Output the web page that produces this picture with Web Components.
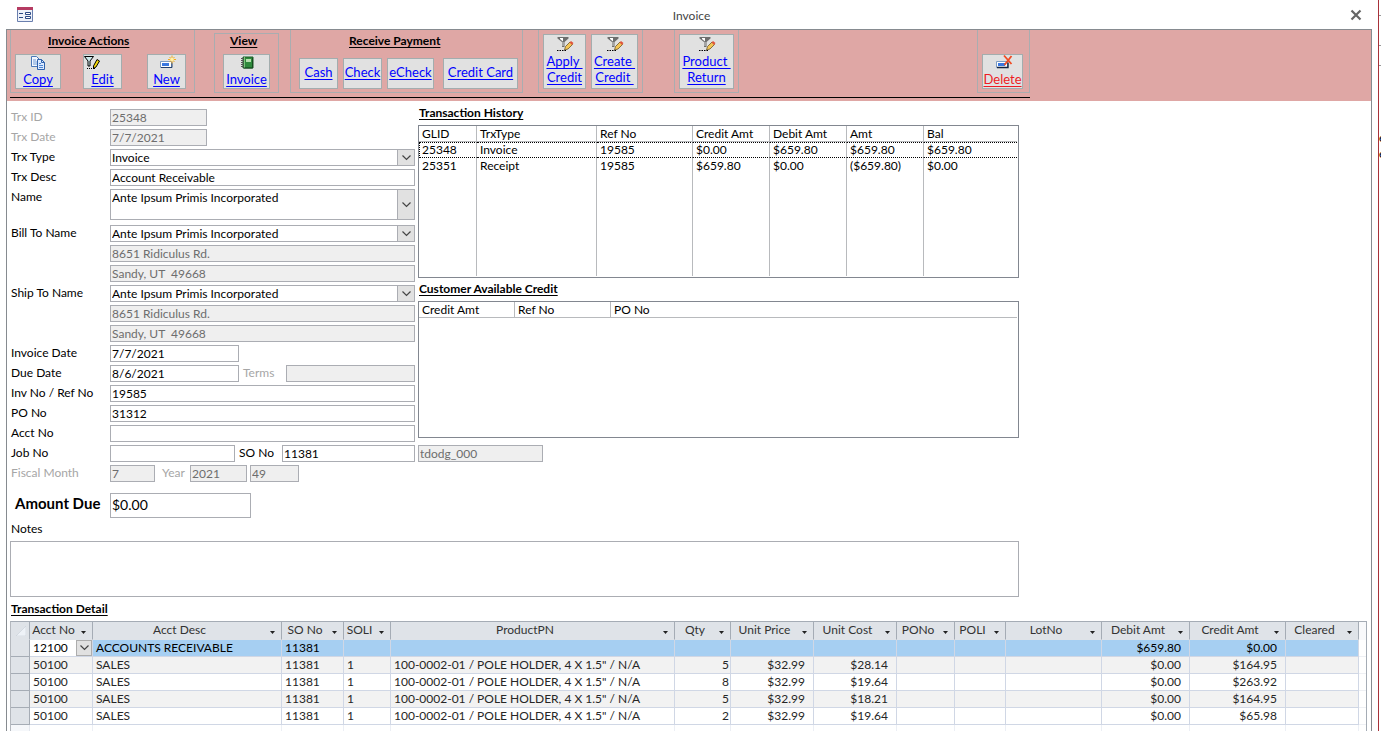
<!DOCTYPE html>
<html lang="en">
<head>
<meta charset="utf-8">
<title>Invoice</title>
<style>
html,body{margin:0;height:100%;overflow:hidden;background:#fff}
body{font:12px/16px Lato,"Open Sans",sans-serif;color:#000}
</style>
</head>
<body>
<invoice-window></invoice-window>
<script>
const esc = s => String(s).replace(/&/g,'&amp;').replace(/"/g,'&quot;').replace(/</g,'&lt;');

const ICONS = {
  copy:`<path d="M1.500 1.500h5l3 3v7h-8z" fill="#f2f7ff" stroke="#4a78b8"/><path d="M3 5h3M3 7h4M3 9h4" stroke="#6f9bd6"/><path d="M7.500 4.500h4l3 3v7h-7z" fill="#dceaff" stroke="#2f62ad"/><path d="M11.500 4.500v3h3" fill="none" stroke="#2f62ad"/><path d="M9 8.500h2M9 10.500h4M9 12.500h4" stroke="#4f86d2"/>`,
  edit:`<path d="M.5 1.500h9L6 6v5H4V6z" fill="#cfe9ec" stroke="#000"/><path d="M9.500 11L13 4.500l2.500 1.500L12 12l-2.500 1.500z" fill="#f5d90a" stroke="#000"/><path d="M3 13.500h1M5 13.500h1M7 13.500h1M9 13.500h2" stroke="#000"/>`,
  add:`<path d="M1.500 6.500h11v6h-11z" fill="#fff" stroke="#7d9bc1"/><path d="M2 12.500h11v-5" fill="none" stroke="#23406e"/><path d="M3 8h7v3H3z" fill="#3b78e0"/><path d="M13 .5v8M9 4.500h8M10.500 2l5 5M15.500 2l-5 5" stroke="#f3a91c"/><circle cx="13" cy="4.500" r="1.800" fill="#fff3a8"/>`,
  book:`<path d="M4 2h10v11H4z" fill="#2f8a3c" stroke="#1c5c27"/><path d="M7 4h5v3H7z" fill="#b7e0ae"/><path d="M5.500 2v11" stroke="#7cc47c"/><path d="M2 3.500h3M2 5.500h3M2 7.500h3M2 9.500h3M2 11.500h3" stroke="#555"/><path d="M13.500 3v10H5" fill="none" stroke="#174c20"/>`,
  funnel:`<path d="M.5 1h11v1.500L7.500 6v5H5V6L.5 2.500z" fill="#6e6e6e"/><path d="M3 2h3v3.500L3 3z" fill="#fff"/><path d="M5.500 6H6.500v4h-1z" fill="#d8d8d8"/><path d="M7.500 14l1-3.500L13 6l2.500 2.500L11 13z" fill="#f3c555" stroke="#6b5528" stroke-width=".8"/><path d="M12.500 6.500L14 5l2.500 2-1.500 2z" fill="#e0553d"/><path d="M0 14.500h1.500M2.500 14.500H4M5 14.500h1.500M7.500 14.500H9" stroke="#000"/>`,
  del:`<path d="M1.500 6.500h11v6h-11z" fill="#fff" stroke="#7d9bc1"/><path d="M2 12.500h11v-5" fill="none" stroke="#14233f" stroke-width="1.400"/><path d="M3 8h7v3H3z" fill="#3b78e0"/><path d="M9 .5l7.500 8.500M16.500 1L9.500 10" stroke="#f04a22" stroke-width="1.800"/>`,
  form:`<path d="M.5.5h15v14H.5z" fill="#eef2fa" stroke="#6a7fae"/><path d="M0 0h16v3H0z" fill="#b53b62"/><path d="M2 6.500h4M2 10.500h4" stroke="#2d4a86"/><path d="M8.500 5.500h5v2h-5zM8.500 9.500h5v2h-5z" fill="#fff" stroke="#2d4a86"/>`
};
const svg = (name) => `<svg width="16" height="16" viewBox="0 0 16 16" aria-hidden="true" overflow="visible">${ICONS[name]}</svg>`;
const chevron = `<svg width="9" height="6" viewBox="0 0 9 6" aria-hidden="true"><path d="M.5.5l4 4 4-4" fill="none" stroke="#444" stroke-width="1.200"/></svg>`;

class Base extends HTMLElement {
  connectedCallback(){
    if (this.shadowRoot) return;
    this.attachShadow({mode:'open'}).innerHTML = `<style>*{box-sizing:border-box}${this.css()}</style>${this.html()}`;
  }
  at(n){ return this.getAttribute(n) || ''; }
}

customElements.define('action-button', class extends Base {
  css(){ return `
    :host{display:block;width:var(--w,39px);height:var(--h,35px)}
    button{width:100%;height:100%;margin:0;padding:0;display:flex;flex-direction:column;align-items:center;justify-content:flex-start;
      background:#e1e1e1;border:1px solid #a3adae;font:13px/16px Lato,sans-serif;color:#00f;cursor:pointer}
    svg{flex:none}
    span{white-space:pre;text-decoration:underline;text-underline-offset:2px;text-align:center}
    :host([plain]) button{justify-content:center;padding:0 0 4px}
    :host([danger]) button{color:#ed1c24}
    :host([corner]) svg{align-self:flex-start}
    :host([tall]) button{padding-top:1px;gap:1px}`; }
  html(){ return `<button type="button">${this.at('icon')?svg(this.at('icon')):''}<span>${esc(this.at('text')).replace('|','\n')}</span></button>`; }
});

customElements.define('action-group', class extends Base {
  css(){ return `
    :host{display:flex;flex-direction:column;box-sizing:border-box;padding:3px 8px 3px 4px;border:1px solid #a9adb0;border-top:0}
    :host([inset]){margin-top:3px;padding-top:0;border-top:1px solid #a9adb0}
    h2{margin:0;padding-left:var(--title-x,0);font:bold 12px/16px Lato,sans-serif;text-decoration:underline;text-underline-offset:2px;white-space:nowrap}
    :host([inset]) h2{line-height:14px}
    div{display:flex;gap:var(--gap,5px);margin-top:auto}`; }
  html(){ return `${this.at('heading')?`<h2>${esc(this.at('heading'))}</h2>`:''}<div><slot></slot></div>`; }
});

customElements.define('form-field', class extends Base {
  css(){ return `
    :host{display:grid;grid-template-columns:var(--label,100px) minmax(0,var(--w,1fr));height:var(--h,17px);box-sizing:border-box}
    :host([bare]){grid-template-columns:minmax(0,var(--w,1fr))}
    label{white-space:nowrap;padding-left:1px;line-height:16px}
    :host([disabled]) label{color:#a6a6a6}
    .box{position:relative;display:flex;min-width:0}
    input,select{appearance:none;width:100%;height:100%;margin:0;padding:0 1px;border:1px solid #abadb3;border-radius:0;background:#fff;
      color:#000;font:var(--size,12px)/15px Lato,sans-serif;outline:0;opacity:1}
    input:disabled{background:#efefef;color:#6d6d6d}
    select{padding:0 18px var(--drop,0) 1px}
    i{position:absolute;right:0;top:0;bottom:0;width:18px;display:grid;place-items:center;background:#e1e1e1;border:1px solid #abadb3;pointer-events:none}
    :host([big]) label{font:bold 15px/20px Lato,sans-serif;padding-left:5px}
    :host([big]) input{padding-bottom:2px}`; }
  html(){
    const v = esc(this.at('value')), d = this.hasAttribute('disabled')?'disabled':'';
    const lab = this.hasAttribute('bare')?'':`<label for="f">${esc(this.at('label'))}</label>`;
    const name = esc(this.at('name')||this.at('label'));
    return `${lab}<div class="box">${this.hasAttribute('combo')
      ? `<select id="f" aria-label="${name}"><option>${v}</option></select><i>${chevron}</i>`
      : `<input id="f" type="text" aria-label="${name}" value="${v}" ${d}>`}</div>`;
  }
});

customElements.define('list-box', class extends Base {
  css(){ return `
    :host{display:block}
    h2{margin:0;padding-left:1px;font:bold 12px/16px Lato,sans-serif;text-decoration:underline;text-underline-offset:2px}
    .frame{margin-top:4px;height:var(--h);border:1px solid #828790;padding:0 1px 1px 0;background:#fff}
    table{width:100%;height:100%;border-collapse:separate;border-spacing:0;table-layout:fixed}
    th,td{padding:0 0 0 3px;font-weight:400;text-align:left;white-space:nowrap;height:16px;line-height:16px;border-right:1px solid #b8babd}
    th{border-bottom:1px solid #b8babd;line-height:15px}
    th:last-child,td:last-child{border-right:0}
    :host([head-only]) td{border:0}
    tr.fill td{height:auto}
    tr.focus td{border-top:1px dotted #000;border-bottom:1px dotted #000;line-height:14px}
    tr.focus td:first-child{border-left:1px dotted #000;padding-left:2px}`; }
  html(){
    const cols = this.at('columns').split('|').map(c=>c.split(':'));
    const rows = this.at('rows') ? this.at('rows').split(';').map(r=>r.split('|')) : [];
    return `<h2>${esc(this.at('heading'))}</h2><div class="frame"><table>
      <colgroup>${cols.map(c=>`<col${c[1]?` style="width:${c[1]}px"`:''}>`).join('')}</colgroup>
      <thead><tr>${cols.map(c=>`<th scope="col">${c[0]}</th>`).join('')}</tr></thead>
      <tbody>${rows.map((r,i)=>`<tr class="${i?'':'focus'}">${r.map(c=>`<td>${c}</td>`).join('')}</tr>`).join('')}
      <tr class="fill">${cols.map(()=>'<td></td>').join('')}</tr></tbody></table></div>`;
  }
});

customElements.define('data-sheet', class extends Base {
  css(){ return `
    :host{display:block;border:1px solid #a5acb5;border-bottom:0;border-left-color:#b4b8be;overflow:hidden}
    table{width:100%;border-collapse:separate;border-spacing:0;table-layout:fixed;color:#262626}
    th,td{height:17px;padding:0 8px 0 3px;line-height:16px;white-space:nowrap;border-right:1px solid #d0d7e5;border-bottom:1px solid #d0d7e5;font-weight:400;text-align:left}
    thead th{height:18px;padding:0;vertical-align:top;background:#dfe3e8;border-color:#a5acb5;border-bottom-color:#dfe3e8}
    thead th:last-child{background:#f8f9fb;border-color:#f8f9fb}
    tbody th{background:#dfe3e8;border-color:#a5acb5}
    thead button{width:100%;height:16px;margin:0;padding:0;border:0;background:none;display:flex;align-items:center;font:inherit;line-height:16px;color:#333}
    thead span{flex:1;text-align:center;padding-left:2px}
    thead i{width:17px;flex:none;display:flex;justify-content:center;padding-top:5px}
    .n{text-align:right}
    .q{padding-right:1px}
    tbody tr:nth-child(even) td{background:#f2f2f2}
    tbody tr.sel td{background:#a6cff2;color:#000}
    tbody tr.sel td.edit{background:#fff;padding:0;position:relative}
    select{appearance:none;display:block;width:100%;height:16px;margin:0;padding:0 16px 0 3px;border:0;background:#fff;font:inherit;color:#000;outline:0}
    td.edit i{position:absolute;right:0;top:0;width:16px;height:16px;display:grid;place-items:center;background:#e1e1e1;border:1px solid #adadad;pointer-events:none}
    tbody td:last-child{background:#fff!important;border-right:0;border-color:#eef0f4}
    tbody tr.blank td{background:#fff;border-right-color:#eceff5}
    tr.blank th{background:#f5f7fa;border-color:#e3e7ee}
    .corner svg{display:block;margin:4px 0 0 5px}`; }
  html(){
    const cols=[['Acct No',63],['Acct Desc',189],['SO No',62],['SOLI',47],['ProductPN',284],['Qty',56],['Unit Price',83],['Unit Cost',83],['PONo',58],['POLI',51],['LotNo',96],['Debit Amt',88],['Credit Amt',96],['Cleared',73]];
    const p='100-0002-01 / POLE HOLDER, 4 X 1.5" / N/A';
    const s=(q,c,t)=>['50100','SALES','11381','1',p,q,'$32.99',c,'','','','$0.00',t,''];
    const rows=[['12100','ACCOUNTS RECEIVABLE','11381','','','','','','','','','$659.80','$0.00',''],
      s(5,'$28.14','$164.95'),s(8,'$19.64','$263.92'),s(5,'$18.21','$164.95'),s(2,'$19.64','$65.98'),Array(14).fill('')];
    const cls={5:'n q',6:'n',7:'n',11:'n',12:'n'};
    return `<table><colgroup><col style="width:19px">${cols.map(c=>`<col style="width:${c[1]}px">`).join('')}<col></colgroup>
      <thead><tr><th class="corner"><svg width="10" height="10" viewBox="0 0 10 10" aria-hidden="true"><path d="M10 0v10H0z" fill="#eef2f7" stroke="#c3cad3" stroke-width=".5"/></svg></th>
      ${cols.map(c=>`<th scope="col"><button type="button"><span>${c[0]}</span><i><svg width="5" height="3" viewBox="0 0 5 3" aria-hidden="true"><path d="M0 0h5L2.500 3z" fill="#222"/></svg></i></button></th>`).join('')}<th></th></tr></thead>
      <tbody>${rows.map((r,i)=>`<tr class="${i===0?'sel':i===5?'blank':''}"><th></th>${r.map((c,j)=> i===0&&j===0
        ? `<td class="edit"><select aria-label="Acct No"><option>${c}</option></select><i>${chevron}</i></td>`
        : `<td class="${cls[j]||''}">${esc(c)}</td>`).join('')}<td></td></tr>`).join('')}</tbody></table>`;
  }
});

customElements.define('invoice-window', class extends Base {
  css(){ return `
    :host{display:grid;grid-template-columns:minmax(0,1fr) 3px;height:100vh;overflow:hidden}
    .win{display:flex;flex-direction:column;padding:0 6px;min-width:0}
    header{flex:none;height:29px;display:flex;align-items:center;justify-content:space-between;padding:0 10px 0 11px}
    h1{margin:0;padding-top:2px;font:12px/16px Lato,sans-serif;color:#444}
    header button{width:12px;height:12px;padding:0;border:0;background:none;display:grid;place-items:center}
    main{flex:1;border:1px solid #868b90;border-bottom:0;min-height:0}
    .bar{background:#dfa7a5;height:71px;padding-left:3px}
    .tools{max-width:1020px;height:68px;border-bottom:1px solid #000;padding-bottom:4px;display:flex}
    .tools>:last-child{margin-left:auto}
    .body{padding:0 4px 0 3px}
    .cols{max-width:1009px;display:grid;grid-template-columns:minmax(0,405px) minmax(0,601px);gap:3px}
    .left{padding-top:8px;display:flex;flex-direction:column;gap:3px}
    .right{padding-top:4px;display:flex;flex-direction:column;gap:3px}
    .row{display:flex}
    .notes{max-width:1009px}
    .notes label{display:block;padding:3px 1px 4px;line-height:16px}
    textarea{display:block;width:100%;height:56px;resize:none;border:1px solid #abadb3;font:inherit;padding:2px;margin:0;outline:0}
    h2{margin:4px 0 4px 1px;font:bold 12px/16px Lato,sans-serif;text-decoration:underline;text-underline-offset:2px}
    aside{border-left:1px solid #a8323a;overflow:hidden;background:linear-gradient(#999,#999) 0 15px/2px 1px no-repeat,linear-gradient(#999,#999) 0 45px/2px 1px no-repeat,linear-gradient(#999,#999) 0 65px/2px 1px no-repeat;padding-top:130px}
    aside span{display:block}`; }
  html(){ return `
  <div class="win">
    <header>${svg('form')}<h1>Invoice</h1>
      <button type="button" aria-label="Close"><svg width="12" height="12" viewBox="0 0 12 12"><path d="M1.500 1.500l9 9M10.500 1.500l-9 9" stroke="#666" stroke-width="2.200"/></svg></button></header>
    <main>
      <div class="bar"><div class="tools">
        <action-group heading="Invoice Actions" style="--title-x:33px;--gap:22px">
          <action-button icon="copy" text="Copy" style="--w:46px"></action-button>
          <action-button icon="edit" text="Edit" corner></action-button>
          <action-button icon="add" text="New" style="margin-left:3px"></action-button></action-group>
        <action-group heading="View" inset style="--title-x:7px;margin-left:19px;padding-left:8px">
          <action-button icon="book" text="Invoice" style="--w:47px"></action-button></action-group>
        <action-group heading="Receive Payment" style="--title-x:50px;margin-left:11px;padding-left:8px;padding-right:4px">
          <action-button plain text="Cash" style="--h:31px"></action-button>
          <action-button plain text="Check" style="--h:31px"></action-button>
          <action-button plain text="eCheck" style="--w:47px;--h:31px"></action-button>
          <action-button plain text="Credit Card" style="--w:75px;--h:31px;margin-left:4px"></action-button></action-group>
        <action-group style="margin-left:15px;padding-right:4px">
          <action-button icon="funnel" text="Apply |Credit" tall style="--w:43px;--h:55px"></action-button>
          <action-button icon="funnel" text="Create |Credit " tall style="--w:47px;--h:55px"></action-button></action-group>
        <action-group style="margin-left:31px;padding-right:4px">
          <action-button icon="funnel" text="Product |Return" tall style="--w:55px;--h:55px"></action-button></action-group>
        <action-group style="padding-right:6px">
          <action-button icon="del" text="Delete" danger style="--w:41px"></action-button></action-group>
      </div></div>
      <div class="body">
        <div class="cols">
          <div class="left">
            <form-field disabled label="Trx ID" value="25348" style="--w:97px"></form-field>
            <form-field disabled label="Trx Date" value="7/7/2021" style="--w:97px"></form-field>
            <form-field combo label="Trx Type" value="Invoice"></form-field>
            <form-field label="Trx Desc" value="Account Receivable"></form-field>
            <form-field combo label="Name" value="Ante Ipsum Primis Incorporated" style="--h:30px;--drop:14px;margin-bottom:3px"></form-field>
            <form-field combo label="Bill To Name" value="Ante Ipsum Primis Incorporated"></form-field>
            <form-field disabled name="Bill to street" value="8651 Ridiculus Rd."></form-field>
            <form-field disabled name="Bill to city" value="Sandy, UT  49668"></form-field>
            <form-field combo label="Ship To Name" value="Ante Ipsum Primis Incorporated"></form-field>
            <form-field disabled name="Ship to street" value="8651 Ridiculus Rd."></form-field>
            <form-field disabled name="Ship to city" value="Sandy, UT  49668"></form-field>
            <form-field label="Invoice Date" value="7/7/2021" style="--w:129px"></form-field>
            <div class="row"><form-field label="Due Date" value="8/6/2021" style="--w:129px;width:232px"></form-field>
              <form-field disabled label="Terms" value="" style="--label:44px;flex:1"></form-field></div>
            <form-field label="Inv No / Ref No" value="19585"></form-field>
            <form-field label="PO No" value="31312"></form-field>
            <form-field label="Acct No" value=""></form-field>
            <div class="row"><form-field label="Job No" value="" style="--w:125px;width:228px"></form-field>
              <form-field label="SO No" value="11381" style="--label:44px;flex:1"></form-field></div>
            <div class="row"><form-field disabled label="Fiscal Month" value="7" style="--w:45px;width:151px"></form-field>
              <form-field disabled label="Year" value="2021" style="--label:29px;--w:57px;width:86px"></form-field>
              <form-field disabled bare name="Period" value="49" style="width:49px;margin-left:3px"></form-field></div>
            <form-field big label="Amount Due" value="$0.00" style="--w:141px;--h:25px;--size:14px;margin-top:8px"></form-field>
          </div>
          <div class="right">
            <list-box heading="Transaction History" style="--h:153px" columns="GLID:58|TrxType:120|Ref No:96|Credit Amt:77|Debit Amt:77|Amt:77|Bal" rows="25348|Invoice|19585|$0.00|$659.80|$659.80|$659.80;25351|Receipt|19585|$659.80|$0.00|($659.80)|$0.00"></list-box>
            <list-box head-only heading="Customer Available Credit" style="--h:137px" columns="Credit Amt:96|Ref No:96|PO No"></list-box>
            <form-field disabled bare name="User" value="tdodg_000" style="width:125px;margin-top:4px"></form-field>
          </div>
        </div>
        <div class="notes"><label for="notes">Notes</label><textarea id="notes"></textarea></div>
        <h2>Transaction Detail</h2>
        <data-sheet></data-sheet>
      </div>
    </main>
  </div>
  <aside><span>e</span><span>e</span></aside>`; }
});
</script>
</body>
</html>
